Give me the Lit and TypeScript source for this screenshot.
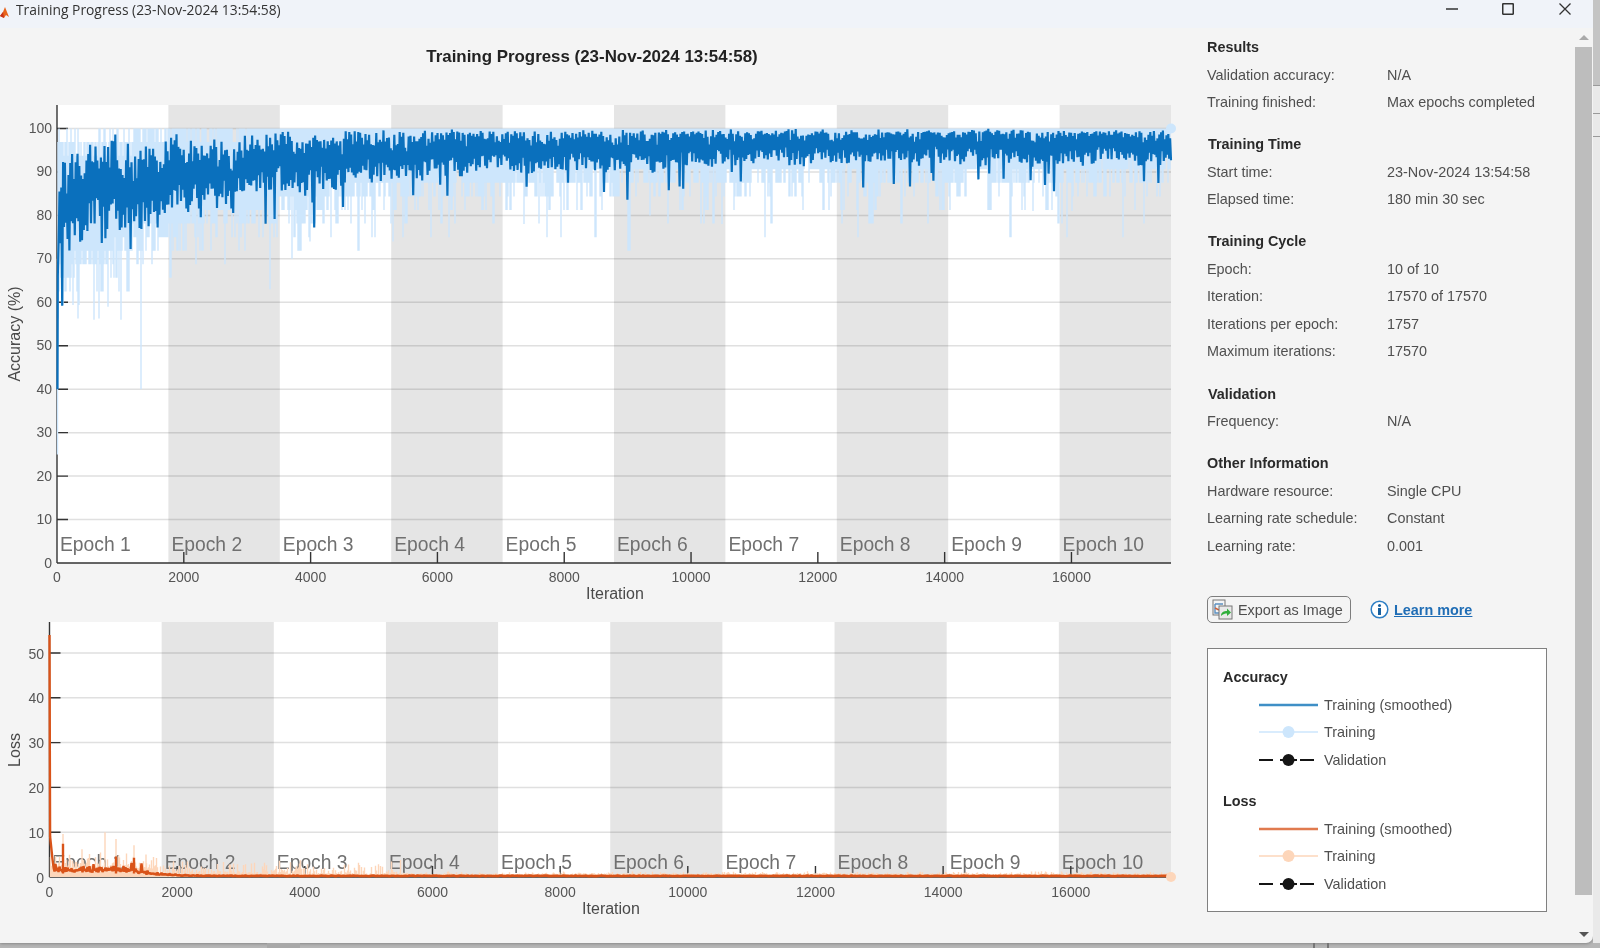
import { LitElement, css, html, svg } from 'lit'
import { customElement, property } from 'lit/decorators.js'

const MAX_ITER = 17570
const EPOCHS = 10
const TITLE = 'Training Progress (23-Nov-2024 13:54:58)'

// small seeded generator so the noisy curves stay the same on every load
function seeded(seed: number) {
   return () => {
      seed |= 0
      seed = (seed + 0x6d2b79f5) | 0
      let t = Math.imul(seed ^ (seed >>> 15), 1 | seed)
      t = (t + Math.imul(t ^ (t >>> 7), 61 | t)) ^ t
      return ((t ^ (t >>> 14)) >>> 0) / 4294967296
   }
}

interface ChartConfig {
   left: number
   top: number
   zero: number
   unit: number // pixels per y unit
   right: number
   yTicks: number[]
   yLabelRight: number
   yLabelShift: number
   xLabelY: number
   epochLift: number
   axisLabel: string
   axisLabelY: number
   iterLabelX: number
   iterLabelY: number
   lightColor: string
   darkColor: string
   darkWidth: number
   endValue: number
   lightPath: (cfg: ChartConfig) => string
   darkPath: (cfg: ChartConfig) => string
}

const toX = (c: ChartConfig, iter: number) => c.left + (iter / MAX_ITER) * (c.right - c.left)
const toY = (c: ChartConfig, v: number) => c.zero - v * c.unit
const accMean = (t: number) => 96.5 - 15 * Math.exp(-t / 3000)

function accuracyLight(c: ChartConfig) {
   const rnd = seeded(11)
   const step = 3.125
   let lo = 80
   let d = `M${c.left + 0.5} ${toY(c, 25)}L${c.left + 0.5} ${toY(c, 70)}`
   for (let x = c.left + 1; x < c.right; x += 1) {
      const t = ((x - c.left) / (c.right - c.left)) * MAX_ITER
      const early = Math.exp(-t / 3000)
      const hiRoll = rnd()
      const hi = t < 1200
         ? (hiRoll < 0.12 ? 100 : hiRoll < 0.7 ? 96.875 : 93.75)
         : t < 3000 ? (hiRoll < 0.7 ? 100 : 96.875) : 100
      if (rnd() > 0.3) {
         const tail = rnd() * rnd() * rnd()
         const depth = 3.5 + rnd() * 5 + 9 * early + tail * (20 + 10 * early)
         lo = Math.round((accMean(t) - depth) / step) * step
      }
      d += `M${x} ${toY(c, hi)}L${x} ${toY(c, lo)}`
   }
   // the few deep dips that stand out in the run
   const dips: [number, number, number][] = [
      [141, 96, 40], [121, 90, 56], [108, 90, 59], [94, 88, 56], [270, 90, 63],
      [292, 90, 70], [310, 90, 74], [393, 88, 74], [524, 90, 78], [650, 90, 80],
      [765, 90, 75], [722, 90, 78], [1033, 90, 81], [1072, 90, 81],
   ]
   for (const [x, a, b] of dips) d += `M${x} ${toY(c, a)}L${x} ${toY(c, b)}`
   return d
}

function accuracyDark(c: ChartConfig) {
   const rnd = seeded(29)
   let drift = 0
   let d = `M${c.left + 0.5} ${toY(c, 40)}L${c.left + 0.8} ${toY(c, 66)}L${c.left + 2} ${toY(c, 78)}`
   let up = true
   for (let x = c.left + 2.5; x < c.right; x += 0.9) {
      const t = ((x - c.left) / (c.right - c.left)) * MAX_ITER
      const early = Math.exp(-t / 3000)
      drift = drift * 0.9 + (rnd() - 0.5) * (0.9 + 1.8 * early)
      const a = 3.6 + 7 * early
      let v = accMean(t) + drift
      v += up ? a * (0.3 + rnd() * 0.9) : -a * (0.3 + rnd() * 0.9)
      if (!up && rnd() < 0.05) v -= 3 + rnd() * (4 + 9 * early)
      if (up && rnd() < 0.04) v += 1 + rnd() * (1 + 5 * early)
      if (v > 99.4) v = 99.4 + rnd() * 0.6 - rnd() * 1.2
      d += `L${x.toFixed(1)} ${toY(c, v).toFixed(1)}`
      up = !up
   }
   return d
}

function lossLight(c: ChartConfig) {
   const rnd = seeded(5)
   let d = ''
   for (let x = c.left + 1; x < c.right; x += 1) {
      const t = ((x - c.left) / (c.right - c.left)) * MAX_ITER
      const top = t < 1700
         ? 1.8 + rnd() * rnd() * 5
         : 0.5 + rnd() * rnd() * (t < 5500 ? 3.6 : 0.8)
      d += `M${x} ${toY(c, 0)}L${x} ${toY(c, top)}`
   }
   const peaks: [number, number][] = [[63, 9.6], [82, 6.2], [105, 10], [116, 8.5], [134, 7.1], [146, 5]]
   for (const [x, v] of peaks) d += `M${x} ${toY(c, 0)}L${x} ${toY(c, v)}`
   return d
}

function lossDark(c: ChartConfig) {
   const rnd = seeded(17)
   let d = `M${c.left} ${toY(c, 54)}L${c.left + 0.6} ${toY(c, 9)}L${c.left + 3} ${toY(c, 4)}`
   let up = true
   for (let x = c.left + 4; x < c.right; x += 1) {
      const t = ((x - c.left) / (c.right - c.left)) * MAX_ITER
      const fade = t < 1300 ? 1 : Math.exp(-(t - 1300) / 350)
      const base = 0.22 + 1.3 * fade
      const swing = 0.2 + 0.8 * fade
      let v = base + (up ? swing : -swing * 0.6) * rnd()
      if (up && rnd() < 0.1 * fade) v += rnd() * 1.6
      d += `L${x.toFixed(1)} ${toY(c, v).toFixed(1)}`
      up = !up
   }
   d += `M63 ${toY(c, 0.8)}L63 ${toY(c, 7.4)}M116 ${toY(c, 0.8)}L116 ${toY(c, 4.6)}M134 ${toY(c, 0.8)}L134 ${toY(c, 4.3)}`
   return d
}

const ACCURACY: ChartConfig = {
   left: 57, right: 1171, top: 15, zero: 473, unit: 4.345,
   yTicks: [0, 10, 20, 30, 40, 50, 60, 70, 80, 90, 100],
   yLabelRight: 52, yLabelShift: 4.5, xLabelY: 492, epochLift: 12,
   axisLabel: 'Accuracy (%)', axisLabelY: 244,
   iterLabelX: 615, iterLabelY: 509,
   lightColor: '#cde6fc', darkColor: '#0a70bd', darkWidth: 2.2, endValue: 100,
   lightPath: accuracyLight, darkPath: accuracyDark,
}

const LOSS: ChartConfig = {
   left: 49.5, right: 1171, top: 12, zero: 267, unit: 4.48,
   yTicks: [0, 10, 20, 30, 40, 50],
   yLabelRight: 44, yLabelShift: 5.5, xLabelY: 287, epochLift: 8,
   axisLabel: 'Loss', axisLabelY: 140,
   iterLabelX: 611, iterLabelY: 304,
   lightColor: '#fdd6ba', darkColor: '#d95319', darkWidth: 2.4, endValue: 0,
   lightPath: lossLight, darkPath: lossDark,
}

const CHARTS: Record<string, ChartConfig> = { accuracy: ACCURACY, loss: LOSS }

@customElement('progress-chart')
export class ProgressChart extends LitElement {
   @property() kind = 'accuracy'
   @property({ type: Number }) height = 520

   render() {
      const c = CHARTS[this.kind]
      const bandW = (c.right - c.left) / EPOCHS
      const epochs = Array.from({ length: EPOCHS }, (_, i) => i)
      const xTicks = Array.from({ length: 9 }, (_, i) => i * 2000)
      return html`
         <svg width="1190" height=${this.height} viewBox="0 0 1190 ${this.height}">
            <rect x=${c.left} y=${c.top} width=${c.right - c.left} height=${c.zero - c.top} fill="#fff"></rect>
            ${epochs.filter(i => i % 2).map(i => svg`
               <rect x=${c.left + i * bandW} y=${c.top} width=${bandW} height=${c.zero - c.top} fill="#e5e5e5"></rect>`)}
            ${c.yTicks.filter(v => v > 0).map(v => svg`
               <line class="grid" x1=${c.left} x2=${c.right} y1=${toY(c, v)} y2=${toY(c, v)}></line>`)}
            ${epochs.map(i => svg`
               <text class="epoch" x=${c.left + i * bandW + 3} y=${c.zero - c.epochLift}>Epoch ${i + 1}</text>`)}
            <line class="axis" x1=${c.left} x2=${c.left} y1=${c.top} y2=${c.zero}></line>
            <line class="axis" x1=${c.left} x2=${c.right} y1=${c.zero} y2=${c.zero}></line>
            ${c.yTicks.filter(v => v > 0).map(v => svg`
               <line class="axis" x1=${c.left} x2=${c.left + 11} y1=${toY(c, v)} y2=${toY(c, v)}></line>`)}
            ${xTicks.filter(t => t > 0).map(t => svg`
               <line class="axis" x1=${toX(c, t)} x2=${toX(c, t)} y1=${c.zero} y2=${c.zero - 11}></line>`)}
            <path d=${c.lightPath(c)} fill="none" stroke=${c.lightColor} stroke-width="1.4"></path>
            <path d=${c.darkPath(c)} fill="none" stroke=${c.darkColor} stroke-width=${c.darkWidth} stroke-linejoin="bevel"></path>
            <circle cx=${c.right} cy=${toY(c, c.endValue)} r="5" fill=${c.lightColor}></circle>
            ${c.yTicks.map(v => svg`
               <text class="tick" text-anchor="end" x=${c.yLabelRight} y=${toY(c, v) + c.yLabelShift}>${v}</text>`)}
            ${xTicks.map(t => svg`
               <text class="tick" text-anchor="middle" x=${toX(c, t)} y=${c.xLabelY}>${t}</text>`)}
            <text class="label" text-anchor="middle" x=${c.iterLabelX} y=${c.iterLabelY}>Iteration</text>
            <text class="label" text-anchor="middle"
               transform="translate(20 ${c.axisLabelY}) rotate(-90)">${c.axisLabel}</text>
         </svg>
      `
   }

   static styles = css`
      :host { display: block; }
      svg { display: block; font-family: "Liberation Sans", Arial, sans-serif; }
      .grid { stroke: #262626; stroke-opacity: 0.14; stroke-width: 1.5; }
      .axis { stroke: #333; stroke-width: 1.4; }
      .epoch { font-size: 19.3px; fill: #707070; }
      .tick { font-size: 14px; fill: #555; }
      .label { font-size: 16px; fill: #4a4a4a; }
   `
}

const SECTIONS: { title: string; indent?: boolean; rows: [string, string][] }[] = [
   { title: 'Results', rows: [['Validation accuracy:', 'N/A'], ['Training finished:', 'Max epochs completed']] },
   { title: 'Training Time', indent: true, rows: [['Start time:', '23-Nov-2024 13:54:58'], ['Elapsed time:', '180 min 30 sec']] },
   { title: 'Training Cycle', indent: true, rows: [
      ['Epoch:', '10 of 10'], ['Iteration:', '17570 of 17570'],
      ['Iterations per epoch:', '1757'], ['Maximum iterations:', '17570'],
   ] },
   { title: 'Validation', indent: true, rows: [['Frequency:', 'N/A']] },
   { title: 'Other Information', rows: [
      ['Hardware resource:', 'Single CPU'], ['Learning rate schedule:', 'Constant'], ['Learning rate:', '0.001'],
   ] },
]

const legendSample = (kind: 'line' | 'marker' | 'dash', color: string) => {
   if (kind === 'line') {
      return html`<svg width="59" height="12"><line x1="0" x2="59" y1="6" y2="6" stroke=${color} stroke-width="2.4"></line></svg>`
   }
   if (kind === 'marker') {
      return html`<svg width="59" height="12"><line x1="0" x2="59" y1="6" y2="6" stroke=${color} stroke-width="1.6"></line><circle cx="29.5" cy="6" r="6" fill=${color}></circle></svg>`
   }
   return html`<svg width="59" height="12">
      <line x1="0" x2="14" y1="6" y2="6" stroke=${color} stroke-width="2"></line>
      <line x1="21" x2="38" y1="6" y2="6" stroke=${color} stroke-width="2"></line>
      <line x1="41" x2="55" y1="6" y2="6" stroke=${color} stroke-width="2"></line>
      <circle cx="29.5" cy="6" r="6" fill=${color}></circle>
   </svg>`
}

@customElement('app-root')
export class AppRoot extends LitElement {
   legendGroup(title: string, dark: string, light: string) {
      return html`
         <div class="legend-group">
            <div class="heading">${title}</div>
            <div class="legend-row">${legendSample('line', dark)}<span>Training (smoothed)</span></div>
            <div class="legend-row">${legendSample('marker', light)}<span>Training</span></div>
            <div class="legend-row">${legendSample('dash', '#151515')}<span>Validation</span></div>
         </div>
      `
   }

   render() {
      return html`
         <div class="upper">
            <div class="window">
               <div class="titlebar">
                  <svg class="app-icon" width="9" height="14" viewBox="0 0 9 14">
                     <path d="M0 9 L3 5 L5 0 L9 10 L6 8 L4 11 Z" fill="#e8641b"></path>
                     <path d="M0 9 L3 5 L4 11 Z" fill="#c8321a"></path>
                  </svg>
                  <span class="window-title">${TITLE}</span>
                  <svg class="win-btn min" width="12" height="12" viewBox="0 0 12 12"><line x1="0" x2="12" y1="6" y2="6"></line></svg>
                  <svg class="win-btn max" width="12" height="12" viewBox="0 0 12 12"><rect x="0.7" y="0.7" width="10.6" height="10.6" rx="1"></rect></svg>
                  <svg class="win-btn close" width="12" height="12" viewBox="0 0 12 12"><path d="M0.5 0.5 L11.5 11.5 M11.5 0.5 L0.5 11.5"></path></svg>
               </div>
               <div class="body">
                  <div class="main">
                     <div class="plot-title">${TITLE}</div>
                     <progress-chart kind="accuracy" height="520"></progress-chart>
                     <progress-chart kind="loss" height="333"></progress-chart>
                  </div>
                  <div class="side">
                     ${SECTIONS.map(s => html`
                        <section>
                           <div class="heading ${s.indent ? 'indent' : ''}">${s.title}</div>
                           ${s.rows.map(([k, v]) => html`
                              <div class="row"><span>${k}</span><span>${v}</span></div>`)}
                        </section>`)}
                     <div class="actions">
                        <button class="export">
                           <svg width="21" height="21" viewBox="0 0 21 21">
                              <rect x="1" y="1" width="12" height="15" fill="#f4f4f4" stroke="#777"></rect>
                              <path d="M3 5 H11 M3 5 V14 H11" fill="none" stroke="#5a8fc0" stroke-width="1.4"></path>
                              <path d="M3 9 L7 11" stroke="#d0603a" stroke-width="1.4"></path>
                              <rect x="7" y="7" width="13" height="13" fill="#e9e9e9" stroke="#777"></rect>
                              <path d="M9 17 C9 13 12 12 15 12 V9.5 L19 13.5 L15 17 V14.6 C13 14.6 11 15 9 17 Z" fill="#2fae3a"></path>
                           </svg>
                           <span>Export as Image</span>
                        </button>
                        <svg width="19" height="19" viewBox="0 0 19 19">
                           <circle cx="9.5" cy="9.5" r="8.3" fill="#fff" stroke="#2f7fc4" stroke-width="1.5"></circle>
                           <circle cx="9.5" cy="5.5" r="1.5" fill="#17609f"></circle>
                           <rect x="8" y="8" width="3" height="7" fill="#17609f"></rect>
                        </svg>
                        <a class="learn" href="#">Learn more</a>
                     </div>
                     <div class="legend">
                        ${this.legendGroup('Accuracy', '#3f8fc6', '#cde6fc')}
                        ${this.legendGroup('Loss', '#e07a4e', '#fdd6ba')}
                     </div>
                  </div>
                  <div class="scrollbar">
                     <div class="arrow"><span class="tri up"></span></div>
                     <div class="thumb"></div>
                     <div class="arrow low"><span class="tri down"></span></div>
                  </div>
               </div>
            </div>
            <div class="edge">
               <div class="edge-top"></div>
               <div class="edge-cell"></div>
               <div class="edge-cell short"></div>
               <div class="edge-cell rest"></div>
            </div>
         </div>
         <div class="lower">
            <span class="lower-mark"></span>
            <span class="lower-line first"></span>
            <span class="lower-line"></span>
         </div>
      `
   }

   static styles = css`
      :host {
         display: block;
         width: 1600px;
         height: 948px;
         overflow: hidden;
         background: #b6b6b6;
         font-family: "Liberation Sans", Arial, sans-serif;
         font-size: 14.4px;
         color: #4f4f4f;
         filter: blur(0.3px); /* the source capture is slightly soft */
      }
      .upper { display: flex; height: 943px; }
      .window {
         width: 1593px;
         display: flex;
         flex-direction: column;
         background: #f4f4f4;
         border-bottom-right-radius: 7px;
         overflow: hidden;
         box-shadow: 0 1px 3px rgba(0, 0, 0, 0.25);
      }
      .titlebar {
         height: 28px;
         flex: none;
         display: flex;
         align-items: center;
         background: #f0f3f9;
      }
      .app-icon { margin: 0 7px 0 0; }
      .window-title {
         flex: 1;
         font-family: "Open Sans", "Noto Sans", sans-serif;
         font-size: 13.85px;
         color: #333;
         margin-top: -9px;
      }
      .win-btn { flex: none; margin-top: -10px; fill: none; stroke: #333; stroke-width: 1.3; }
      .win-btn.max { margin-left: 44px; stroke-width: 1.6; }
      .win-btn.close { margin-left: 45px; margin-right: 22px; }
      .body { flex: 1; display: flex; min-height: 0; }
      .main { width: 1190px; flex: none; }
      .plot-title {
         height: 62px;
         padding-right: 6px;
         box-sizing: border-box;
         padding-top: 19px;
         text-align: center;
         font-size: 16.9px;
         line-height: 20px;
         font-weight: bold;
         color: #222;
      }
      .side { flex: 1; padding: 6px 0 0 17px; min-width: 0; }
      section { margin-bottom: 14.5px; }
      .heading { height: 27.55px; line-height: 27.55px; font-weight: bold; color: #2a2a2a; }
      .heading.indent { padding-left: 1px; }
      .row { display: grid; grid-template-columns: 180px 1fr; height: 27.55px; line-height: 27.55px; }
      .actions { display: flex; align-items: center; margin-top: 36px; height: 27px; }
      .export {
         width: 144px;
         height: 27px;
         display: flex;
         align-items: center;
         gap: 5px;
         padding: 0 0 0 4px;
         margin-right: 19px;
         box-sizing: border-box;
         background: #f4f4f4;
         border: 1px solid #7d7d7d;
         border-radius: 5px;
         font: inherit;
         color: inherit;
      }
      .learn { margin-left: 5px; font-weight: bold; color: #1f6db5; text-decoration: underline; }
      .legend {
         width: 340px;
         height: 264px;
         margin-top: 25px;
         box-sizing: border-box;
         padding: 15px 15px 0;
         background: #fff;
         border: 1px solid #808080;
      }
      .legend-group { margin-bottom: 15px; }
      .legend .heading { height: 26.5px; line-height: 27px; }
      .legend-row {
         display: flex;
         align-items: center;
         gap: 6px;
         height: 27.5px;
         padding-left: 36px;
      }
      .legend-row svg { flex: none; }
      .scrollbar {
         width: 17px;
         margin-right: 1px;
         flex: none;
         display: flex;
         flex-direction: column;
      }
      .arrow { height: 19px; flex: none; display: flex; align-items: center; justify-content: center; }
      .arrow.low { height: 48px; align-items: flex-end; padding-bottom: 6px; box-sizing: border-box; }
      .thumb { flex: 1; background: #bdbdbd; }
      .tri { width: 0; height: 0; border-left: 5px solid transparent; border-right: 5px solid transparent; }
      .tri.up { border-bottom: 5px solid #a9a9a9; }
      .tri.down { border-top: 5px solid #555; }
      .edge { flex: 1; display: flex; flex-direction: column; background: #e9e9e9; }
      .edge-top { height: 85px; background: #c4c4c4; }
      .edge-cell { height: 27px; border-top: 1px solid #9a9a9a; }
      .edge-cell.short { height: 22px; }
      .edge-cell.rest { flex: 1; }
      .lower { height: 5px; display: flex; }
      .lower-mark { width: 33px; margin-left: 267px; background: #a8a8a8; }
      .lower-line { width: 2px; margin-left: 12px; background: #777; }
      .lower-line.first { margin-left: 1013px; }
   `
}
